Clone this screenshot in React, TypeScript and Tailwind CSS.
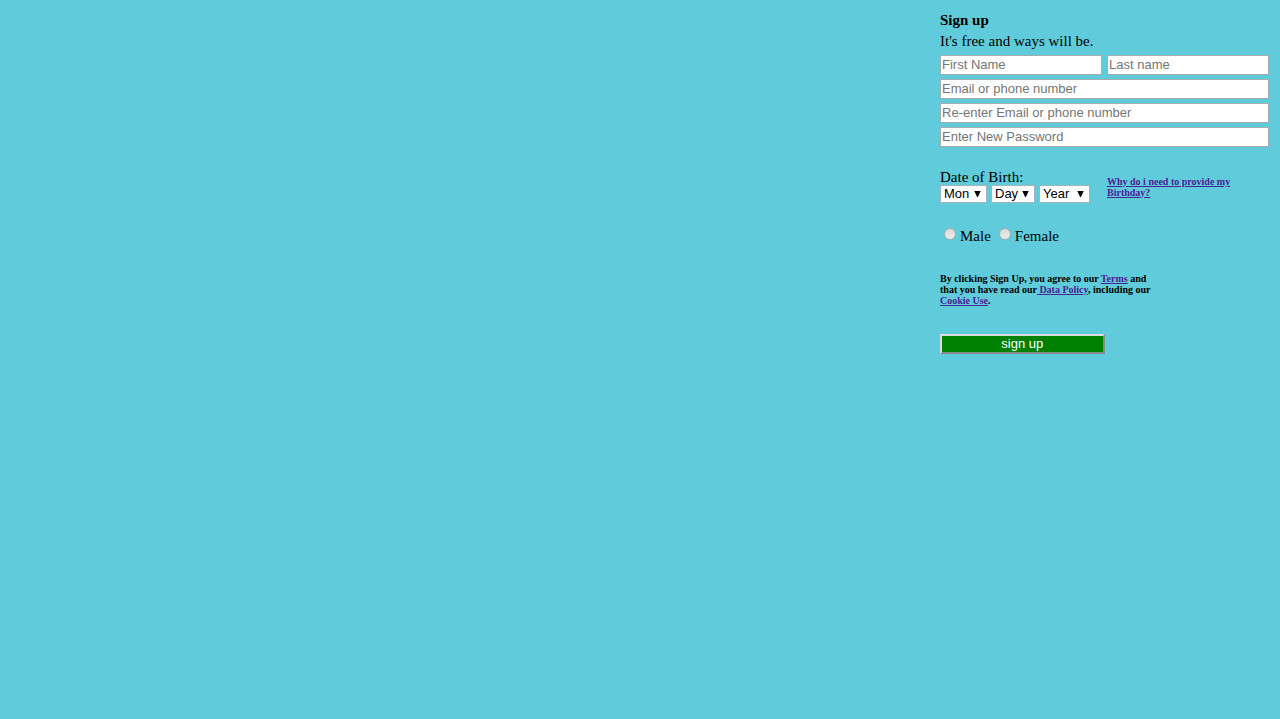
import React from "react";

type TextFieldProps = { label: string; type?: string };

function TextField({ label, type = "text" }: TextFieldProps) {
  return (
    <input
      type={type}
      aria-label={label}
      placeholder={label}
      className="h-5 w-full min-w-0 border border-[#a3adad] bg-white px-px pb-px text-[13px] leading-4 text-black placeholder:text-[#757575]"
    />
  );
}

type DatePartProps = { label: string; options: string[]; width: string };

function DatePart({ label, options, width }: DatePartProps) {
  return (
    <div className={`relative ${width}`}>
      <select
        aria-label={label}
        className="block h-[18px] w-full appearance-none border border-[#a3b5b8] bg-white pl-[3px] text-[13px] leading-4 text-black"
      >
        <option>{label}</option>
        {options.map((option) => (
          <option key={option}>{option}</option>
        ))}
      </select>
      <svg
        viewBox="0 0 7 6"
        aria-hidden="true"
        className="pointer-events-none absolute top-[6px] right-[6px] h-[6px] w-[7px]"
      >
        <path d="M0.3 0H6.7L3.9 6H3.1Z" fill="#000" />
      </svg>
    </div>
  );
}

function GenderOption({ label }: { label: string }) {
  return (
    <label className="flex items-center gap-1">
      <input
        type="radio"
        name="gender"
        value={label}
        className="mb-1 size-3 appearance-none rounded-full border border-[#a2aeb0] bg-linear-to-b from-[#d9dcdc] to-[#ececec] checked:bg-[#555]"
      />
      {label}
    </label>
  );
}

function PolicyLink({ children }: { children: React.ReactNode }) {
  return (
    <a href="#" className="text-[#4b2394] underline">
      {children}
    </a>
  );
}

const months = ["Jan", "Feb", "Mar", "Apr", "May", "Jun", "Jul", "Aug", "Sep", "Oct", "Nov", "Dec"];
const days = Array.from({ length: 31 }, (_, i) => String(i + 1));
const years = Array.from({ length: 60 }, (_, i) => String(2018 - i));

export default function App() {
  return (
    <main className="flex min-h-screen justify-end bg-[#60cbda] px-[11px] pt-3 font-['Liberation_Serif',serif] text-[15px] leading-4 text-black">
      <form className="w-full max-w-[329px]" onSubmit={(e) => e.preventDefault()}>
        <h1 className="font-bold">Sign up</h1>
        <p className="mt-[5px]">It's free and ways will be.</p>

        <div className="mt-[6px] flex flex-col gap-1 font-['Liberation_Sans',sans-serif]">
          <div className="grid grid-cols-2 gap-[5px]">
            <TextField label="First Name" />
            <TextField label="Last name" />
          </div>
          <TextField label="Email or phone number" />
          <TextField label="Re-enter Email or phone number" />
          <TextField label="Enter New Password" type="password" />
        </div>

        <div className="mt-[22px] grid grid-cols-2 gap-[5px]">
          <fieldset>
            <legend>Date of Birth:</legend>
            <div className="flex gap-1 font-['Liberation_Sans',sans-serif]">
              <DatePart label="Mon" options={months} width="w-[47px]" />
              <DatePart label="Day" options={days} width="w-11" />
              <DatePart label="Year" options={years} width="w-[51px]" />
            </div>
          </fieldset>
          <p className="max-w-[130px] pt-[7px] text-[10px] leading-[11px] font-bold">
            <PolicyLink>Why do i need to provide my Birthday?</PolicyLink>
          </p>
        </div>

        <div className="mt-[25px] flex gap-2 pl-1">
          <GenderOption label="Male" />
          <GenderOption label="Female" />
        </div>

        <p className="mt-[29px] max-w-[220px] text-[10px] leading-[11px] font-bold">
          By clicking Sign Up, you agree to our <PolicyLink>Terms</PolicyLink> and that you have read our
          <PolicyLink> Data Policy</PolicyLink>, including our <PolicyLink>Cookie Use</PolicyLink>.
        </p>

        <button
          type="submit"
          className="mt-7 block h-5 w-1/2 border-2 border-t-[#d8dede] border-r-[#858b8b] border-b-[#858b8b] border-l-[#d8dede] bg-[#008000] font-['Liberation_Sans',sans-serif] text-[13px] leading-4 text-white"
        >
          sign up
        </button>
      </form>
    </main>
  );
}
